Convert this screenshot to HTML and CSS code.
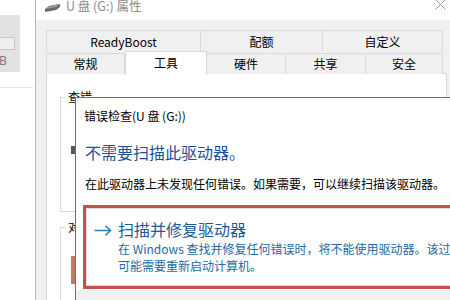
FILE: index.html
```html
<!DOCTYPE html>
<html lang="zh-CN">

<head>
    <meta charset="UTF-8">
    <meta name="viewport" content="width=device-width, initial-scale=1.0">
    <title>U 盘 (G:) 属性</title>
    <link rel="stylesheet" href="styles.css">
</head>

<body>
    <section class="back-win">
        <div class="back-panel">
            <div class="back-field"></div>
            <span class="back-unit">B</span>
        </div>
        <div class="back-rule"></div>
    </section>

    <section class="props">
        <header class="titlebar">
            <svg class="drive-icon" width="15" height="8" viewBox="0 0 15 8">
                <polygon points="0,5 4,2 15,0 15,3 11,6 0,8" fill="#6b6b6b" />
                <polygon points="0,5 4,2 15,0 11,3" fill="#9a9a9a" />
            </svg>
            <span class="title">U 盘 (G:) 属性</span>
            <svg class="close" width="11" height="11" viewBox="0 0 11 11">
                <path d="M0.5 0.5 L10.5 10.5 M10.5 0.5 L0.5 10.5" stroke="#9b9b9b" stroke-width="1" />
            </svg>
        </header>

        <div class="props-body">
            <div class="tab-row tab-row-back">
                <div class="tab">ReadyBoost</div>
                <div class="tab">配额</div>
                <div class="tab">自定义</div>
            </div>
            <div class="tab-row tab-row-front">
                <div class="tab">常规</div>
                <div class="tab tab-active">工具</div>
                <div class="tab">硬件</div>
                <div class="tab">共享</div>
                <div class="tab">安全</div>
            </div>

            <div class="panel">
                <fieldset class="group group-check">
                    <legend>查错</legend>
                    <div class="group-icon icon-check"></div>
                </fieldset>
                <fieldset class="group group-optimize">
                    <legend>对驱动器进行优化和碎片整理</legend>
                    <div class="group-icon icon-defrag"></div>
                </fieldset>
            </div>
        </div>
    </section>

    <section class="check-dialog">
        <div class="check-title">错误检查(U 盘 (G:))</div>
        <div class="check-content">
            <h1 class="check-heading">不需要扫描此驱动器。</h1>
            <p class="check-text">在此驱动器上未发现任何错误。如果需要，可以继续扫描该驱动器。</p>
            <div class="fix-link">
                <div class="fix-inner">
                    <svg class="fix-arrow" width="18" height="11" viewBox="0 0 18 11">
                        <path d="M0.5 5.5 H16.5 M11.5 0.8 L16.6 5.5 L11.5 10.2" fill="none" stroke="#2b7db4" stroke-width="1.5" />
                    </svg>
                    <div class="fix-copy">
                        <div class="fix-title">扫描并修复驱动器</div>
                        <div class="fix-desc">在 Windows 查找并修复任何错误时，将不能使用驱动器。该过程<br>可能需要重新启动计算机。</div>
                    </div>
                </div>
            </div>
        </div>
        <div class="check-footer"></div>
    </section>
</body>

</html>
```

FILE: styles.css
```css
body {
    margin: 0;
    width: 450px;
    height: 300px;
    overflow: hidden;
    position: relative;
    background: #fff;
    font-family: "Noto Sans CJK SC", "Noto Sans", sans-serif;
    font-size: 12px;
    color: #000;
}

/* window behind, on the left */
.back-win {
    position: absolute;
    left: 0;
    top: 0;
    width: 36px;
    height: 300px;
    background: #fff;
}

.back-panel {
    margin-top: 15px;
    width: 20px;
    height: 57px;
    padding-top: 22px;
    box-sizing: border-box;
    background: #e2e2e2;
}

.back-field {
    width: 15px;
    height: 13px;
    box-sizing: border-box;
    background: #eeeeee;
    border: 1px solid #c6c6c6;
    border-left: none;
}

.back-unit {
    display: block;
    margin: 5px 0 0 -1px;
    font-family: "Noto Sans", sans-serif;
    font-size: 12px;
    line-height: 12px;
    color: #7a7a7a;
}

.back-rule {
    margin-top: 15px;
    width: 33px;
    height: 1px;
    background: #e4e4e4;
}

/* drive properties window */
.props {
    position: absolute;
    left: 35px;
    top: -9px;
    width: 416px;
    height: 320px;
    border-left: 1px solid #b8b8b8;
    background: #f0f0f0;
}

.titlebar {
    height: 29px;
    display: flex;
    align-items: center;
    background: #fff;
}

.drive-icon {
    margin: 4px 0 0 9px;
}

.title {
    margin-left: 6px;
    color: #8c8c8c;
    font-size: 12.5px;
}

.close {
    margin: -3px 6px 0 auto;
}

.props-body {
    padding: 10px 5px 0 10px;
}

.tab-row {
    display: grid;
}

.tab-row-back {
    grid-template-columns: 155px 122px 120px;
    height: 21px;
}

.tab-row-front {
    grid-template-columns: 79px 82px 79px 80px 77px;
    height: 22px;
    align-items: end;
}

.tab {
    height: 21px;
    box-sizing: border-box;
    border-top: 1px solid #d9d9d9;
    border-right: 1px solid #d9d9d9;
    background: #f0f0f0;
    text-align: center;
    line-height: 19px;
}

.tab:first-child {
    border-left: 1px solid #d9d9d9;
}

.tab-row-back .tab {
    line-height: 22px;
}

.tab-active {
    position: relative;
    z-index: 1;
    height: 24px;
    margin-bottom: -1px;
    background: #fff;
    border-left: 1px solid #d9d9d9;
    line-height: 21px;
}

.panel {
    height: 250px;
    padding: 0 13px;
    border: 1px solid #d9d9d9;
    background: #fff;
}

.group {
    margin: 0;
    padding: 0;
    min-width: 0;
    box-sizing: border-box;
    border: 1px solid #dcdcdc;
}

.group legend {
    margin-left: 5px;
    padding: 0 2px;
    line-height: 16px;
}

.group-check {
    margin-top: 15px;
    height: 123px;
}

.group-optimize {
    margin-top: 7px;
    height: 100px;
}

.group-icon {
    margin-left: 10px;
    width: 20px;
}

.icon-check {
    margin-top: 41px;
    height: 8px;
    background: #585858;
}

.icon-defrag {
    margin-top: 21px;
    height: 28px;
    background: #c9756a;
}

/* error checking dialog on top */
.check-dialog {
    position: absolute;
    left: 75px;
    top: 97px;
    width: 400px;
    height: 220px;
    border-left: 1px solid #2a87b4;
    border-top: 1px solid #2a87b4;
    background: #fff;
}

.check-title {
    height: 34px;
    padding-left: 8px;
    display: flex;
    align-items: center;
}

.check-content {
    padding-left: 9px;
}

.check-heading {
    margin: 8px 0 0;
    font-size: 16px;
    font-weight: normal;
    line-height: 24px;
    color: #1f4f99;
}

.check-text {
    margin: 11px 0 0;
    line-height: 18px;
    white-space: nowrap;
}

.fix-link {
    margin: 12px 0 0 -2px;
    border: 3px solid #c8504b;
    border-right: none;
}

.fix-inner {
    display: flex;
    gap: 6px;
    padding: 10px 0 11px 7px;
    border: 1px solid #dadada;
    border-right: none;
}

.fix-arrow {
    flex: none;
    margin-top: 6px;
}

.fix-title {
    font-size: 16px;
    line-height: 21px;
    color: #1d5a97;
}

.fix-desc {
    line-height: 17px;
    color: #2369a3;
    white-space: nowrap;
}

.check-footer {
    height: 40px;
    margin-top: 1px;
    background: #f0f0f0;
}
```
